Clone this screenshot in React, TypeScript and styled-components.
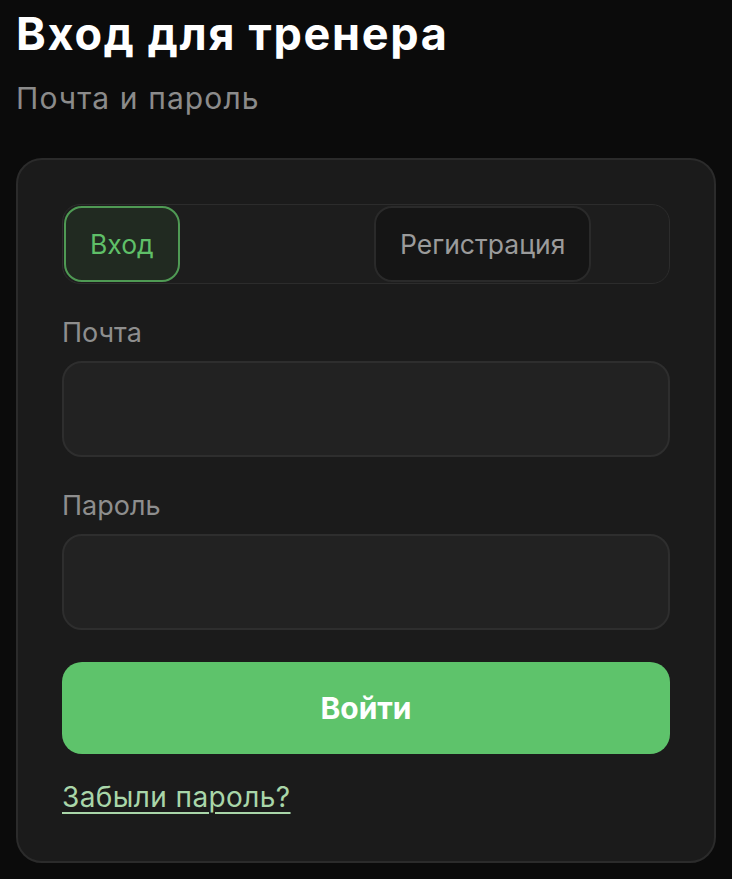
import { useState } from 'react';
import styled, { createGlobalStyle } from 'styled-components';

const GlobalStyle = createGlobalStyle`
  html, body {
    margin: 0;
    padding: 0;
    background: #0b0b0b;
  }
  body {
    font-family: Inter, "Noto Sans", sans-serif;
    -webkit-font-smoothing: antialiased;
  }
  * { box-sizing: border-box; }
`;

const Page = styled.div`
  padding: 7px 16px 16px;
  display: flex;
  flex-direction: column;
`;

const Title = styled.h1`
  margin: 0;
  font-size: 45px;
  font-weight: 700;
  line-height: 54px;
  color: #ffffff;
  letter-spacing: 1.7px;
`;

const Subtitle = styled.p`
  margin: 19px 0 0;
  font-size: 30px;
  line-height: 36px;
  color: #8b8b8b;
  letter-spacing: 1.1px;
`;

const Card = styled.div`
  margin-top: 42px;
  background: #1b1b1b;
  border: 2px solid #2b2b2b;
  border-radius: 26px;
  padding: 44px 44px 47px;
  display: flex;
  flex-direction: column;
`;

const Tabs = styled.div`
  display: grid;
  grid-template-columns: 1fr 1fr;
  column-gap: 16px;
  padding: 1px;
  border: 1px solid #2c2c2c;
  border-radius: 18px;
  background: #1d1d1d;
`;

const Tab = styled.button<{ $active?: boolean }>`
  justify-self: start;
  height: 76px;
  padding: 0 24px;
  border-radius: 18px;
  font-family: inherit;
  font-size: 26.5px;
  cursor: pointer;
  border: 2px solid ${p => (p.$active ? '#4f9a54' : '#2a2a2a')};
  background: ${p => (p.$active ? '#212a21' : '#151515')};
  color: ${p => (p.$active ? '#5fbf68' : '#9b9b9b')};
`;

const Field = styled.label`
  display: flex;
  flex-direction: column;
  gap: 13px;
  margin-top: 34px;
`;

const FieldLabel = styled.span`
  font-size: 27px;
  line-height: 30px;
  color: #8e8e8e;
`;

const Input = styled.input`
  height: 96px;
  width: 100%;
  border-radius: 20px;
  border: 2px solid #2e2e2e;
  background: #222222;
  color: #ffffff;
  font-family: inherit;
  font-size: 26px;
  padding: 0 22px;
  outline: none;
`;

const Submit = styled.button`
  margin-top: 32px;
  height: 92px;
  border: none;
  border-radius: 20px;
  background: #5ec36b;
  color: #ffffff;
  font-family: inherit;
  font-size: 30px;
  font-weight: 700;
  cursor: pointer;
`;

const Forgot = styled.a`
  margin-top: 26px;
  align-self: flex-start;
  font-size: 28px;
  line-height: 34px;
  color: #a9d6a9;
  letter-spacing: 0.4px;
  text-decoration: underline;
  text-decoration-thickness: 1.5px;
  text-underline-offset: 5px;
  cursor: pointer;
`;

export default function App() {
  const [mode, setMode] = useState<'login' | 'register'>('login');

  return (
    <>
      <GlobalStyle />
      <Page>
        <Title>Вход для тренера</Title>
        <Subtitle>Почта и пароль</Subtitle>
        <Card>
          <Tabs>
            <Tab $active={mode === 'login'} onClick={() => setMode('login')}>Вход</Tab>
            <Tab $active={mode === 'register'} onClick={() => setMode('register')}>Регистрация</Tab>
          </Tabs>
          <Field>
            <FieldLabel>Почта</FieldLabel>
            <Input type="email" />
          </Field>
          <Field>
            <FieldLabel>Пароль</FieldLabel>
            <Input type="password" />
          </Field>
          <Submit>Войти</Submit>
          <Forgot>Забыли пароль?</Forgot>
        </Card>
      </Page>
    </>
  );
}
